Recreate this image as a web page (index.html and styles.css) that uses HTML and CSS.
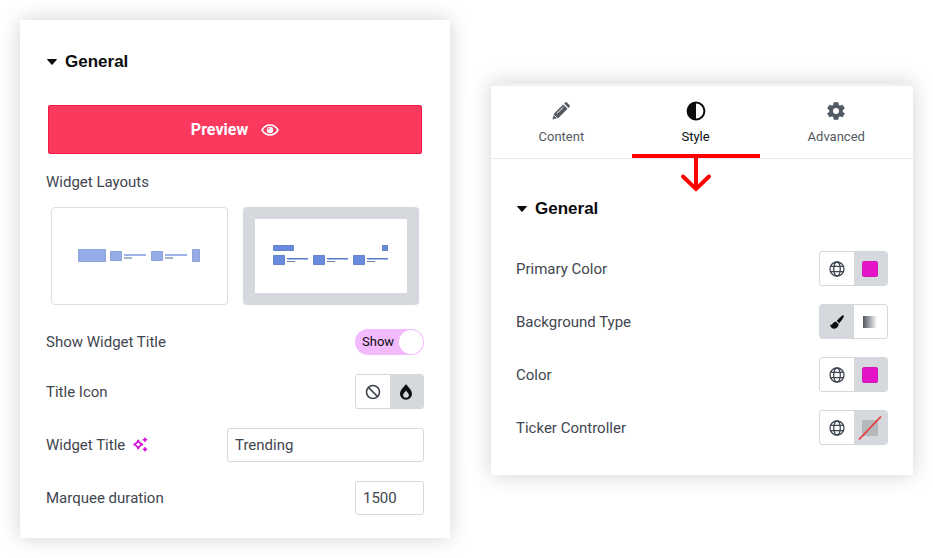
FILE: index.html
```
<!DOCTYPE html>
<html lang="en">
<head>
    <meta charset="UTF-8">
    <meta name="viewport" content="width=device-width, initial-scale=1.0">
    <title>Widget settings</title>
    <link rel="stylesheet" href="styles.css">
</head>
<body>
    <svg class="sprite" aria-hidden="true">
        <symbol id="globe" viewBox="0 0 16 16">
            <g fill="none" stroke="currentColor" stroke-width="1.3">
                <circle cx="8" cy="8" r="7" />
                <ellipse cx="8" cy="8" rx="3.3" ry="7" />
                <path d="M1.6 5.4h12.8M1.6 10.6h12.8" />
            </g>
        </symbol>
        <symbol id="caret" viewBox="0 0 10 6">
            <path d="M.6 0h8.8q.8 0 .3.7L5.6 5.4q-.6.6-1.2 0L.3.7Q-.2 0 .6 0z" fill="currentColor" />
        </symbol>
    </svg>

    <main class="page">
        <section class="panel panel-content">
            <h2 class="section-title">
                <button type="button" aria-expanded="true"><svg class="caret"><use href="#caret" /></svg>General</button>
            </h2>

            <button type="button" class="preview">Preview
                <svg width="18" height="12" viewBox="0 0 18 12">
                    <path d="M1 6Q4 1 9 1t8 5q-3 5-8 5T1 6z" fill="none" stroke="#fff" stroke-width="1.6" />
                    <circle cx="9" cy="6" r="3.2" fill="#fff" />
                    <path d="M7.2 5.8q.1-1.6 1.6-1.8" fill="none" stroke="#fb395f" stroke-width="1" />
                </svg>
            </button>

            <fieldset class="layouts">
                <legend>Widget Layouts</legend>
                <div class="layout-list">
                    <label class="layout">
                        <input type="radio" name="layout" aria-label="Inline layout">
                        <svg width="124" height="16" viewBox="0 0 124 16">
                            <g fill="#96ace8" stroke="#8da3d3">
                                <path d="M1.5 1.5h27v12h-27zM33.5 3.5h11v9h-11zM74.5 3.5h11v9h-11zM115.5 1.5h7v12h-7z" />
                            </g>
                            <path d="M47 6h22v2H47zM88 6h22v2H88z" fill="#9db2e8" />
                            <path d="M47 9h8v2h-8zM88 9h8v2h-8z" fill="#a4b3cd" />
                        </svg>
                    </label>
                    <label class="layout">
                        <input type="radio" name="layout" aria-label="Stacked layout" checked>
                        <svg width="118" height="22" viewBox="0 0 118 22">
                            <g fill="#688adf" stroke="#6684c8">
                                <path d="M1.5.5h20v5h-20zM110.500.5h5v5h-5zM1.5 10.5h11v9h-11zM41.5 10.5h11v9h-11zM81.5 10.5h11v9h-11z" />
                            </g>
                            <path d="M15 13h21v1H15zM55 13h21v1H55zM95 13h21v1H95z" fill="#5778c4" />
                            <path d="M15 14h21v1H15zM55 14h21v1H55zM95 14h21v1H95z" fill="#a9bdf0" />
                            <path d="M15 16h8v1h-8zM55 16h8v1h-8zM95 16h8v1h-8z" fill="#6d80a3" />
                        </svg>
                    </label>
                </div>
            </fieldset>

            <div class="controls">
                <div class="control">
                    <label for="show-title">Show Widget Title</label>
                    <span class="switch">
                        <input type="checkbox" id="show-title" checked>
                        <span class="switch-text">Show</span>
                    </span>
                </div>
                <div class="control">
                    <span>Title Icon</span>
                    <div class="choices">
                        <button type="button" aria-label="No icon">
                            <svg width="16" height="16" viewBox="0 0 16 16" fill="none" stroke="currentColor" stroke-width="1.6">
                                <circle cx="8" cy="8" r="6.5" />
                                <path d="M3.4 3.4l9.200 9.200" />
                            </svg>
                        </button>
                        <button type="button" class="active" aria-label="Icon">
                            <svg width="12" height="16" viewBox="0 0 12 16">
                                <path d="M6 0c.6 1.5 6 5.500 6 10a6 5.800 0 0 1-12 0C0 5.500 5.400 1.500 6 0z" fill="#0c0d0e" />
                                <path d="M6 6.400c.4 1.100 2.900 2.800 2.900 4.700a2.900 2.700 0 0 1-5.800 0C3.100 9.200 5.600 7.500 6 6.400z" fill="#d5d8dc" />
                            </svg>
                        </button>
                    </div>
                </div>
                <div class="control">
                    <label for="widget-title">Widget Title
                        <svg class="sparkle" width="15" height="15" viewBox="0 0 15 15">
                            <path d="M5.2 3.200Q6.100 6.600 9.500 7.500 6.100 8.400 5.200 11.800 4.300 8.400.9 7.500 4.300 6.600 5.200 3.200z" fill="none" stroke="currentColor" stroke-width="1.400" stroke-linejoin="round" />
                            <path d="M12 .5l.7 1.600 1.600.7-1.600.7-.7 1.600-.7-1.600-1.600-.7 1.600-.7zM12 10l.7 1.600 1.600.7-1.600.7-.7 1.600-.7-1.600-1.600-.7 1.600-.7z" fill="currentColor" stroke="currentColor" stroke-width=".6" />
                        </svg>
                    </label>
                    <input type="text" id="widget-title" class="field" value="Trending">
                </div>
                <div class="control">
                    <label for="duration">Marquee duration</label>
                    <input type="text" inputmode="numeric" id="duration" class="field field-small" value="1500">
                </div>
            </div>
        </section>

        <section class="panel panel-style">
            <nav class="tabs">
                <button type="button" class="tab">
                    <svg width="20" height="20" viewBox="0 0 20 20" fill="currentColor">
                        <path d="M3.200 12.400l9-9 4.400 4.400-9 9-6.200 1.800zM13.200 2.500l1-1q.8-.8 1.700 0l2.700 2.700q.8.800 0 1.700l-1 1z" />
                        <path d="M5.800 12.600l6.600-6.500M3.200 14.300l2.500 2.500" fill="none" stroke="#fff" stroke-width="1" />
                    </svg>
                    Content
                </button>
                <button type="button" class="tab active">
                    <svg width="20" height="20" viewBox="0 0 20 20">
                        <circle cx="10" cy="10" r="8.400" fill="none" stroke="currentColor" stroke-width="2" />
                        <path d="M10 1.500v17a8.500 8.500 0 0 1 0-17z" fill="currentColor" />
                    </svg>
                    Style
                    <svg class="arrow" width="32" height="35" viewBox="0 0 32 35" fill="none" stroke="#f00" stroke-width="4">
                        <path d="M16 0v31" />
                        <path d="M3 18.500l13 12.500 13-12.500" stroke-linecap="round" />
                    </svg>
                </button>
                <button type="button" class="tab">
                    <svg width="20" height="20" viewBox="0 0 20 20">
                        <path d="M8 1.500h4l.5 2.500 1.500.9 2.500-.9 2 3.400-2 1.700v1.800l2 1.700-2 3.400-2.500-.9-1.500.9-.5 2.500H8L7.500 16 6 15.100l-2.500.9-2-3.400 2-1.700V9.100l-2-1.700L3.500 4l2.500.9L7.500 4z" fill="currentColor" stroke="currentColor" stroke-width=".6" stroke-linejoin="round" />
                        <circle cx="10" cy="10" r="3" fill="#fff" />
                    </svg>
                    Advanced
                </button>
            </nav>

            <div class="panel-body">
                <h2 class="section-title">
                    <button type="button" aria-expanded="true"><svg class="caret"><use href="#caret" /></svg>General</button>
                </h2>
                <div class="controls">
                    <div class="control">
                        <span>Primary Color</span>
                        <div class="choices">
                            <button type="button" aria-label="Global color"><svg width="16" height="16"><use href="#globe" /></svg></button>
                            <button type="button" class="active" aria-label="Pick color"><span class="swatch"></span></button>
                        </div>
                    </div>
                    <div class="control">
                        <span>Background Type</span>
                        <div class="choices">
                            <button type="button" class="active" aria-label="Classic">
                                <svg width="14" height="14" viewBox="0 0 14 14" fill="#0c0d0e">
                                    <path d="M13.300.3q.9.500.4 1.600-1.700 3.400-4.500 6.300L6.700 6q2.700-3.500 5.500-5.600.6-.4 1.100-.1zM6 6.700l2.600 2.400q.1 2.600-1.700 3.700-3.200 1.900-5.600-.4Q.3 11.300.1 9.400q.9.500 1.500.3.600-.2 1.100-1.300Q3.800 6.500 6 6.700z" />
                                </svg>
                            </button>
                            <button type="button" aria-label="Gradient"><span class="gradient"></span></button>
                        </div>
                    </div>
                    <div class="control">
                        <span>Color</span>
                        <div class="choices">
                            <button type="button" aria-label="Global color"><svg width="16" height="16"><use href="#globe" /></svg></button>
                            <button type="button" class="active" aria-label="Pick color"><span class="swatch"></span></button>
                        </div>
                    </div>
                    <div class="control">
                        <span>Ticker Controller</span>
                        <div class="choices">
                            <button type="button" aria-label="Global color"><svg width="16" height="16"><use href="#globe" /></svg></button>
                            <button type="button" class="active" aria-label="Pick color">
                                <svg width="24" height="26" viewBox="0 0 24 26">
                                    <rect x="4" y="5" width="16" height="16" rx="2" fill="#b5b7ba" />
                                    <path d="M1 24.500L23 1.500" stroke="#e53b3b" stroke-width="1.800" />
                                </svg>
                            </button>
                        </div>
                    </div>
                </div>
            </div>
        </section>
    </main>
</body>
</html>
```
FILE: styles.css
```
* {
    box-sizing: border-box;
}

body {
    margin: 0;
    background-color: #fff;
    color: #3f4650;
    font-family: Roboto, Arial, sans-serif;
    font-size: 15px;
    line-height: 20px;
}

button,
input {
    font: inherit;
    color: inherit;
}

button {
    padding: 0;
    border: none;
    background: none;
    cursor: pointer;
}

.sprite {
    display: none;
}

.page {
    display: flex;
    flex-wrap: wrap;
    align-items: center;
    gap: 41px;
    padding: 20px;
}

.panel {
    background-color: #fff;
    box-shadow: 0 0 20px rgba(0, 0, 0, 0.18);
}

.panel-content {
    flex: 1 1 430px;
    padding: 32px 26px 23px;
}

.panel-style {
    flex: 1 1 422px;
    border-top: 3px solid #f0f0f1;
}

.panel-body {
    padding: 40px 25px 30px;
}

.section-title {
    margin: 0 0 33px;
    font-family: "Liberation Sans", Arial, sans-serif;
    font-size: 17px;
    color: #0c0d0e;
}

.section-title button {
    display: flex;
    align-items: center;
    gap: 8px;
    padding-left: 1px;
}

.caret {
    width: 10px;
    height: 6px;
}

.preview {
    display: flex;
    justify-content: center;
    align-items: center;
    gap: 13px;
    width: calc(100% - 4px);
    height: 49px;
    margin: 0 2px 18px;
    border: 1px solid #f5194a;
    border-radius: 2px;
    background-color: #fb395f;
    color: #fff;
    font-size: 16px;
    font-weight: 700;
}

/* layout picker */
.layouts {
    margin: 0 0 24px;
    padding: 0;
    border: none;
}

.layouts legend {
    margin-bottom: 15px;
    padding: 0;
}

.layout-list {
    display: grid;
    grid-template-columns: 1fr 1fr;
    gap: 15px;
    padding: 0 5px;
}

.layout {
    display: flex;
    justify-content: center;
    align-items: center;
    height: 98px;
    border: 1px solid #dddfe2;
    border-radius: 4px;
    cursor: pointer;
}

.layout:has(input:checked) {
    border: 12px solid #d5d8dc;
}

.layout input {
    position: absolute;
    opacity: 0;
}

/* control rows */
.controls {
    display: flex;
    flex-direction: column;
    gap: 19px;
}

.panel-style .controls {
    gap: 18px;
}

.panel-style .section-title {
    margin-bottom: 32px;
}

.control {
    display: flex;
    justify-content: space-between;
    align-items: center;
}

.sparkle {
    margin-left: 4px;
    color: #d004d4;
    vertical-align: -2px;
}

.field {
    width: 197px;
    height: 34px;
    padding: 0 7px;
    border: 1px solid #d5d8dc;
    border-radius: 3px;
    background-color: #fff;
}

.field-small {
    width: 69px;
}

.switch {
    position: relative;
    width: 69px;
    height: 26px;
}

.switch input {
    appearance: none;
    display: flex;
    justify-content: flex-end;
    width: 100%;
    height: 100%;
    margin: 0;
    padding: 1px;
    border-radius: 13px;
    background-color: #f3bafd;
    cursor: pointer;
}

.switch input::before {
    content: "";
    width: 24px;
    height: 24px;
    border-radius: 50%;
    background-color: #fff;
}

.switch-text {
    position: absolute;
    top: 3px;
    left: 7px;
    font-size: 13px;
    color: #0c0d0e;
    pointer-events: none;
}

.choices {
    display: flex;
    width: 69px;
    height: 35px;
    border: 1px solid #d5d8dc;
    border-radius: 3px;
    overflow: hidden;
}

.choices button {
    display: flex;
    flex: 1;
    justify-content: center;
    align-items: center;
}

.choices .active {
    background-color: #d5d8dc;
}

.swatch {
    width: 16px;
    height: 16px;
    border: 1px solid #cf1cb9;
    border-radius: 2px;
    background-color: #e614c8;
}

.gradient {
    width: 14px;
    height: 12px;
    background: linear-gradient(to right, #50565e, #fff);
}

/* tabs */
.tabs {
    display: grid;
    grid-template-columns: 11fr 10fr 12fr;
    height: 73px;
    border-bottom: 1px solid #e6e8ea;
}

.tab {
    position: relative;
    display: flex;
    flex-direction: column;
    align-items: center;
    gap: 6px;
    padding-top: 15px;
    font-size: 13px;
    color: #515962;
}

.tab.active {
    color: #0c0d0e;
    border-bottom: 4px solid #f00;
}

.arrow {
    position: absolute;
    top: calc(100% + 4px);
    left: calc(50% - 16px);
}
```
